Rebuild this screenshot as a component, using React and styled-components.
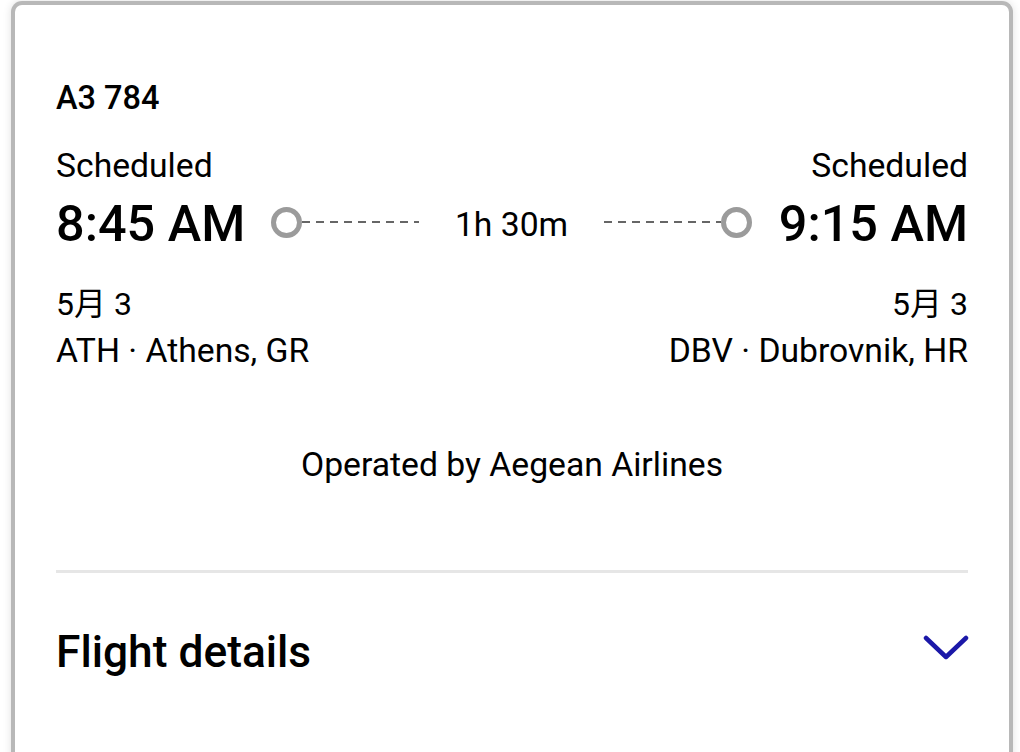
import styled, { createGlobalStyle } from 'styled-components';

const GlobalStyle = createGlobalStyle`
  body {
    margin: 0;
    background: #ffffff;
    font-family: Roboto, "Noto Sans CJK SC", sans-serif;
    color: #000;
    overflow: hidden;
  }
`;

const Card = styled.div`
  box-sizing: border-box;
  width: 1002px;
  min-height: 800px;
  margin: 1px 0 0 11px;
  padding: 73px 41px 0 41px;
  border: 4px solid #b8b8b8;
  border-bottom: none;
  border-radius: 11px 11px 0 0;
  background: #fff;
  box-shadow: 0 0 8px rgba(0, 0, 0, 0.12);
`;

const FlightNumber = styled.div`
  font-size: 32.5px;
  font-weight: 500;
  line-height: 40px;
`;

const Row = styled.div`
  display: flex;
  justify-content: space-between;
  align-items: center;
  margin-top: ${(p) => p.$gap || 0}px;
`;

const Text = styled.div`
  font-size: ${(p) => p.$size || 33.7}px;
  line-height: 40px;
  text-align: ${(p) => (p.$right ? 'right' : 'left')};
  white-space: nowrap;
`;

const Time = styled.div`
  font-size: 50.4px;
  font-weight: 500;
  line-height: 60px;
  white-space: nowrap;
`;

const Connector = styled.div`
  flex: 1;
  display: flex;
  align-items: center;
  margin: -4px 27px 0 26px;
`;

const Dot = styled.span`
  box-sizing: border-box;
  width: 31px;
  height: 31px;
  border: 5px solid #9b9b9b;
  border-radius: 50%;
  flex-shrink: 0;
`;

const Dashes = styled.span`
  flex: 1;
  height: 2px;
  background: repeating-linear-gradient(to right, #666 0 8px, transparent 8px 14px);
`;

const Duration = styled.span`
  font-size: 33.7px;
  line-height: 40px;
  margin: 5px 36px 0 36px;
`;

const Operated = styled.div`
  margin-top: 74px;
  font-size: 33.7px;
  line-height: 40px;
  text-align: center;
`;

const Divider = styled.div`
  height: 3px;
  background: #e6e6e6;
  margin-top: 85px;
`;

const DetailsRow = styled.div`
  display: flex;
  justify-content: space-between;
  align-items: center;
  margin-top: 49px;
`;

const DetailsTitle = styled.div`
  font-size: 44.3px;
  font-weight: 500;
  line-height: 60px;
`;

const Chevron = () => (
  <svg width="46" height="28" viewBox="0 0 46 28" style={{ marginTop: -8, marginRight: -1 }}>
    <path d="M3 4 L23 23 L43 4" fill="none" stroke="#1b18a8" strokeWidth="4.5" strokeLinecap="round" strokeLinejoin="round" />
  </svg>
);

export default function App() {
  return (
    <>
      <GlobalStyle />
      <Card>
        <FlightNumber>A3 784</FlightNumber>
        <Row $gap={28}>
          <Text>Scheduled</Text>
          <Text $right>Scheduled</Text>
        </Row>
        <Row $gap={8}>
          <Time>8:45 AM</Time>
          <Connector>
            <Dot />
            <Dashes />
            <Duration>1h 30m</Duration>
            <Dashes />
            <Dot />
          </Connector>
          <Time>9:15 AM</Time>
        </Row>
        <Row $gap={30}>
          <Text $size={32}>5月 3</Text>
          <Text $size={32} $right>5月 3</Text>
        </Row>
        <Row $gap={7}>
          <Text>ATH · Athens, GR</Text>
          <Text $right>DBV · Dubrovnik, HR</Text>
        </Row>
        <Operated>Operated by Aegean Airlines</Operated>
        <Divider />
        <DetailsRow>
          <DetailsTitle>Flight details</DetailsTitle>
          <Chevron />
        </DetailsRow>
      </Card>
    </>
  );
}
